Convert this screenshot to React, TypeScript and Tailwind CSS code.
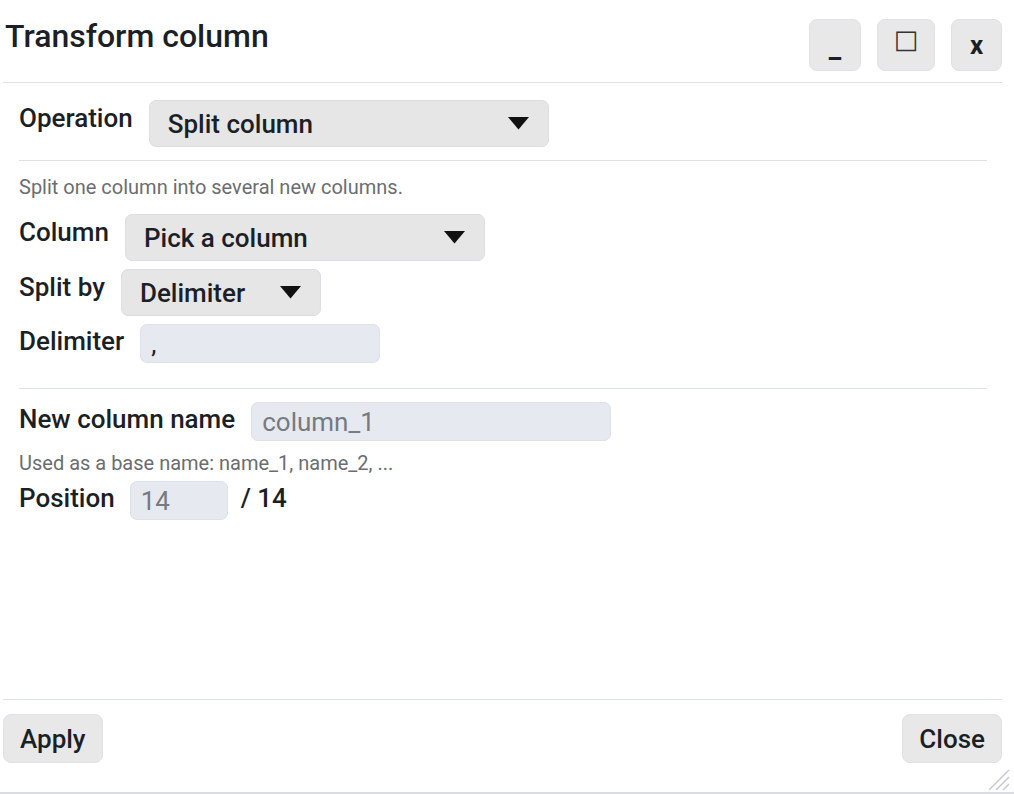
import React from "react";

const font = "font-['Roboto','Liberation_Sans',sans-serif]";

function Select({ value, width }: { value: string; width: string }) {
  return (
    <div
      className={`${width} h-[47px] flex items-center justify-between pl-[18px] pr-[19px] bg-[#e6e6e6] border border-[#dcdee4] rounded-[7px] text-[26px] leading-[30px] font-medium`}
    >
      <span>{value}</span>
      <svg width="21" height="13" viewBox="0 0 21 13" className="shrink-0">
        <path d="M0 0 L21 0 L10.5 12.5 Z" fill="#111" />
      </svg>
    </div>
  );
}

function Field({ value, width, muted }: { value: string; width: string; muted?: boolean }) {
  return (
    <div
      className={`${width} h-[39px] flex items-center pl-[10px] bg-[#e6e9f0] border border-[#dde1ea] rounded-[7px] text-[26px] leading-[30px] ${
        muted ? "text-[#777a80]" : "text-[#1c1f26]"
      }`}
    >
      {value}
    </div>
  );
}

function Label({ children, top = "mt-[3px]" }: { children: React.ReactNode; top?: string }) {
  return <div className={`${top} text-[26px] leading-[30px] font-medium whitespace-nowrap`}>{children}</div>;
}

function WinButton({ children, className }: { children: React.ReactNode; className: string }) {
  return (
    <button
      className={`h-[52px] flex items-end justify-center bg-[#e8e8e8] border border-[#dfe1e6] rounded-[8px] leading-[30px] ${className}`}
    >
      {children}
    </button>
  );
}

export default function App() {
  return (
    <div
      className={`relative w-[1014px] h-[794px] bg-white flex flex-col border-b-2 border-[#d9dce3] text-[#1c1f26] ${font}`}
    >
      {/* title bar */}
      <div className="ml-[3px] mr-[12px] h-[83px] shrink-0 border-b border-[#dfe1ea] flex items-start justify-between">
        <div className="pl-[2px] pt-[17px] text-[32px] leading-[38px] font-medium">Transform column</div>
        <div className="pt-[19px] flex gap-4">
          <WinButton className="w-[52px] pb-[7px] text-[28px] font-bold">_</WinButton>
          <WinButton className="w-[58px] pb-[17px]">
            <span className="font-['DejaVu_Sans',sans-serif] text-[26px] leading-[28px] font-normal text-[#333]">□</span>
          </WinButton>
          <WinButton className="w-[51px] pb-[10px] text-[26px] font-bold">x</WinButton>
        </div>
      </div>

      {/* body */}
      <div className="ml-[19px] mr-[27px] pt-[17px] flex flex-col">
        <div className="flex items-start gap-4">
          <Label>Operation</Label>
          <Select value="Split column" width="w-[400px]" />
        </div>

        <div className="mt-[13px] h-px bg-[#dfe1ea]" />

        <div className="mt-[14px] text-[20px] leading-[24px] text-[#6b6d70]">
          Split one column into several new columns.
        </div>

        <div className="mt-[15px] flex flex-col gap-2">
          <div className="flex items-start gap-4">
            <Label>Column</Label>
            <Select value="Pick a column" width="w-[360px]" />
          </div>
          <div className="flex items-start gap-4">
            <Label>Split by</Label>
            <Select value="Delimiter" width="w-[200px]" />
          </div>
          <div className="flex items-start gap-4">
            <Label top="mt-[2px]">Delimiter</Label>
            <Field value="," width="w-[240px]" />
          </div>
        </div>

        <div className="mt-[25px] h-px bg-[#dfe1ea]" />

        <div className="mt-[13px] flex items-start gap-4">
          <Label top="mt-[2px]">New column name</Label>
          <Field value="column_1" width="w-[360px]" muted />
        </div>
        <div className="mt-[10px] text-[20px] leading-[24px] text-[#6b6d70]">
          Used as a base name: name_1, name_2, ...
        </div>
        <div className="mt-[6px] flex items-start">
          <Label top="mt-[2px]">Position</Label>
          <div className="ml-[15px]">
            <Field value="14" width="w-[98px]" muted />
          </div>
          <div className="ml-[13px] mt-[2px] text-[26px] leading-[30px] font-medium">/ 14</div>
        </div>
      </div>

      <div className="flex-1" />

      {/* footer */}
      <div className="ml-[3px] mr-[12px] border-t border-[#dfe1ea] pt-[14px] pb-[29px] flex justify-between">
        <button className="h-[49px] px-[16px] bg-[#e8e8e8] border border-[#dfe1e6] rounded-[8px] text-[26px] leading-[30px] font-medium">
          Apply
        </button>
        <button className="h-[49px] px-[16px] bg-[#e8e8e8] border border-[#dfe1e6] rounded-[8px] text-[26px] leading-[30px] font-medium">
          Close
        </button>
      </div>

      {/* resize grip */}
      <svg className="absolute right-[4px] bottom-[1px]" width="22" height="22" viewBox="0 0 22 22">
        <path d="M1 21 L21 1 M8 21 L21 8 M15 21 L21 15" stroke="#c6cad3" strokeWidth="1.5" />
      </svg>
    </div>
  );
}
